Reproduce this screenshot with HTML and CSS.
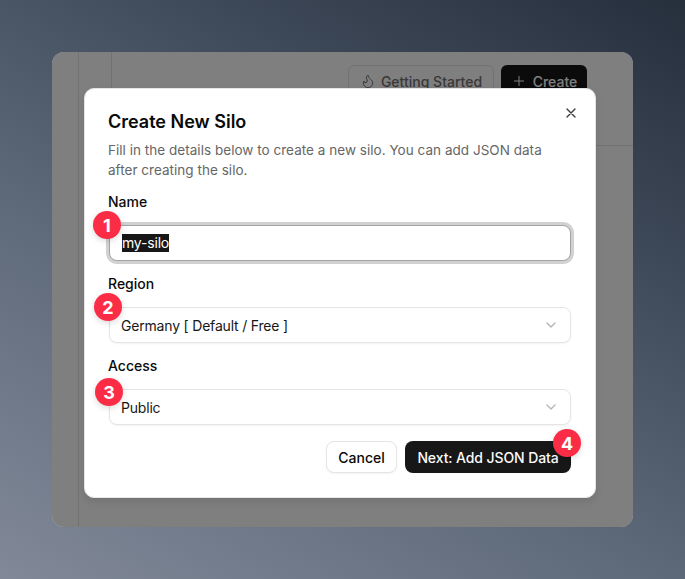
FILE: index.html
```html
<!DOCTYPE html>
<html lang="en">
<head>
<meta charset="utf-8">
<title>Create New Silo</title>
<link rel="stylesheet" href="styles.css">
</head>
<body>
<div class="window">
  <aside class="rail"></aside>
  <main class="main">
    <header class="topbar">
      <button class="btn-ghost">
        <svg class="flame" width="16" height="16" viewBox="0 0 24 24" fill="none" stroke="currentColor" stroke-width="1.500" stroke-linecap="round" stroke-linejoin="round"><path d="M8.5 14.5A2.5 2.5 0 0 0 11 12c0-1.38-.5-2-1-3-1.07-2.14-.22-4.05 2-6 .5 2.5 2 4.9 4 6.5 2 1.6 3 3.5 3 5.500a7 7 0 1 1-14 0c0-1.150.43-2.290 1-3a2.500 2.500 0 0 0 2.500 2.500z"/></svg>
        Getting Started
      </button>
      <button class="btn-dark">
        <svg width="16" height="16" viewBox="0 0 24 24" fill="none" stroke="currentColor" stroke-width="1.500" stroke-linecap="round"><path d="M12 5v14M5 12h14"/></svg>
        Create
      </button>
    </header>
  </main>
  <div class="scrim"></div>
</div>

<section class="modal">
  <button class="close" aria-label="Close">
    <svg width="16" height="16" viewBox="0 0 24 24" fill="none" stroke="currentColor" stroke-width="2" stroke-linecap="round"><path d="M18 6 6 18M6 6l12 12"/></svg>
  </button>
  <h2 class="title">Create New Silo</h2>
  <p class="desc">Fill in the details below to create a new silo. You can add JSON data after creating the silo.</p>

  <div class="field">
    <label class="label">Name</label>
    <div class="control control-focus"><span class="selected">my-silo</span></div>
    <span class="badge b1">1</span>
  </div>
  <div class="field">
    <label class="label">Region</label>
    <div class="control">Germany [ Default / Free ]
      <svg class="chev" width="16" height="16" viewBox="0 0 24 24" fill="none" stroke="currentColor" stroke-width="2" stroke-linecap="round" stroke-linejoin="round"><path d="m6 9 6 6 6-6"/></svg>
    </div>
    <span class="badge b2">2</span>
  </div>
  <div class="field">
    <label class="label">Access</label>
    <div class="control">Public
      <svg class="chev" width="16" height="16" viewBox="0 0 24 24" fill="none" stroke="currentColor" stroke-width="2" stroke-linecap="round" stroke-linejoin="round"><path d="m6 9 6 6 6-6"/></svg>
    </div>
    <span class="badge b3">3</span>
  </div>

  <footer class="actions">
    <button class="btn-cancel">Cancel</button>
    <button class="btn-next">Next: Add JSON Data<span class="badge b4">4</span></button>
  </footer>
</section>
</body>
</html>
```
FILE: styles.css
```css
* { box-sizing: border-box; }
html, body { margin: 0; height: 100%; }
body {
  position: relative;
  width: 685px;
  height: 579px;
  overflow: hidden;
  padding: 52px;
  font-family: Inter, "Liberation Sans", sans-serif;
  background: linear-gradient(30deg, #818998 0%, #5f6a7a 38%, #414c5c 68%, #262f3c 100%);
}
button { font-family: inherit; cursor: pointer; }
.window {
  position: relative;
  display: flex;
  width: 581px;
  height: 475px;
  border-radius: 12px;
  background: #fff;
  overflow: hidden;
}
.scrim { position: absolute; inset: 0; background: rgba(0, 0, 0, .5); }
.rail { width: 27px; border-right: 1px solid #e5e5e5; }
.main { flex: 1; padding-left: 32px; }
.topbar {
  display: flex;
  justify-content: flex-end;
  gap: 7px;
  height: 94px;
  padding: 13px 46px 0 0;
  border-left: 1px solid #e5e5e5;
  border-bottom: 1px solid #e5e5e5;
}
.btn-ghost, .btn-dark {
  display: flex;
  align-items: center;
  justify-content: center;
  gap: 5px;
  height: 32px;
  border-radius: 6px;
  font-size: 14px;
  font-weight: 500;
}
.btn-ghost { width: 146px; background: #fff; border: 1px solid #e5e5e5; color: #737373; }
.btn-dark { width: 86px; background: #171717; border: 0; color: #fff; gap: 6px; }
.modal {
  position: absolute;
  left: 84px;
  top: 88px;
  width: 512px;
  height: 410px;
  padding: 19px 23px 0;
  background: #fff;
  border-radius: 10px;
  border: 1px solid #e5e5e5;
  box-shadow: 0 4px 8px rgba(0, 0, 0, .1);
}
.close {
  position: absolute;
  top: 16px;
  right: 16px;
  display: flex;
  padding: 0;
  border: 0;
  background: none;
  color: #3a3a3a;
}
.title { margin: 0 0 4px; font-size: 18px; line-height: 28px; font-weight: 600; color: #0a0a0a; }
.desc { margin: 0 0 12px; font-size: 13.5px; letter-spacing: .03px; line-height: 20px; color: #666; }
.field { position: relative; margin-bottom: 13px; }
.label { display: block; margin-bottom: 13px; font-size: 14px; line-height: 20px; font-weight: 500; color: #0a0a0a; }
.control {
  display: flex;
  align-items: center;
  justify-content: space-between;
  height: 36px;
  margin: 0 1px;
  padding: 0 11px;
  border: 1px solid #e5e5e5;
  border-radius: 8px;
  background: #fff;
  font-size: 14px;
  letter-spacing: -.19px;
  color: #171717;
  box-shadow: 0 1px 2px rgba(0, 0, 0, .05);
}
.control-focus { padding-bottom: 1px; border-color: #a3a3a3; box-shadow: 0 0 0 3px rgba(163, 163, 163, .5); }
.selected { margin-left: 1px; background: #171717; color: #fff; line-height: 18px; }
.chev { color: #a3a3a3; opacity: .8; }
.actions { display: flex; justify-content: flex-end; gap: 8px; margin: 16px 1px 0; }
.btn-cancel, .btn-next {
  position: relative;
  height: 32px;
  border-radius: 8px;
  font-size: 14px;
  font-weight: 500;
}
.btn-cancel { width: 71px; background: #fff; border: 1px solid #e5e5e5; color: #0a0a0a; box-shadow: 0 1px 2px rgba(0, 0, 0, .05); }
.btn-next { width: 166px; background: #171717; border: 0; color: #fafafa; letter-spacing: -.1px; }
.badge {
  position: absolute;
  display: flex;
  align-items: center;
  justify-content: center;
  width: 28px;
  height: 28px;
  border-radius: 50%;
  background: #fb2c45;
  color: #fff;
  font-size: 18px;
  font-weight: 700;
  letter-spacing: 0;
  box-shadow: 0 2px 6px rgba(0, 0, 0, .15);
}
.b1 { left: -15px; top: 19px; }
.b2 { left: -14px; top: 19px; }
.b3 { left: -13px; top: 22px; }
.b4 { right: -10px; top: -12px; }
```
